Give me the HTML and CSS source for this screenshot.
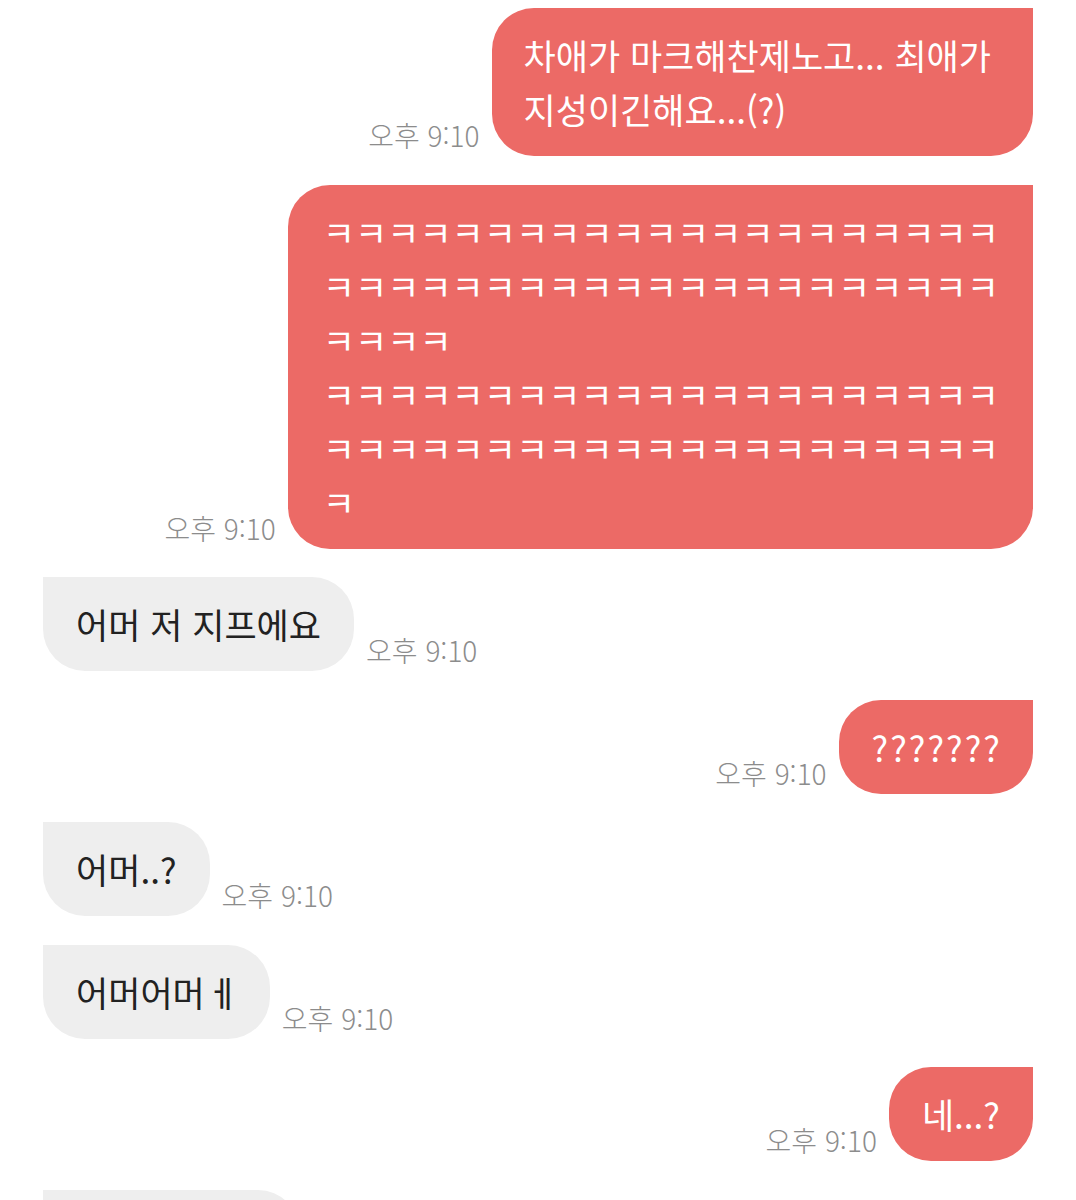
FILE: index.html
```html
<!DOCTYPE html>
<html lang="ko">
<head>
<meta charset="utf-8">
<title>채팅</title>
<link rel="stylesheet" href="styles.css">
</head>
<body>
<div class="chat">
  <div class="row sent">
    <span class="time">오후 9:10</span>
    <div class="bubble wide">차애가 마크해찬제노고... 최애가<br>지성이긴해요...(?)</div>
  </div>
  <div class="row sent">
    <span class="time">오후 9:10</span>
    <div class="bubble kk">ㅋㅋㅋㅋㅋㅋㅋㅋㅋㅋㅋㅋㅋㅋㅋㅋㅋㅋㅋㅋㅋ<br>ㅋㅋㅋㅋㅋㅋㅋㅋㅋㅋㅋㅋㅋㅋㅋㅋㅋㅋㅋㅋㅋ<br>ㅋㅋㅋㅋ<br>ㅋㅋㅋㅋㅋㅋㅋㅋㅋㅋㅋㅋㅋㅋㅋㅋㅋㅋㅋㅋㅋ<br>ㅋㅋㅋㅋㅋㅋㅋㅋㅋㅋㅋㅋㅋㅋㅋㅋㅋㅋㅋㅋㅋ<br>ㅋ</div>
  </div>
  <div class="row recv">
    <div class="bubble">어머 저 지프에요</div>
    <span class="time">오후 9:10</span>
  </div>
  <div class="row sent">
    <span class="time">오후 9:10</span>
    <div class="bubble qq">???????</div>
  </div>
  <div class="row recv">
    <div class="bubble">어머..?</div>
    <span class="time">오후 9:10</span>
  </div>
  <div class="row recv">
    <div class="bubble tight">어머어머 ㅔ</div>
    <span class="time">오후 9:10</span>
  </div>
  <div class="row sent">
    <span class="time">오후 9:10</span>
    <div class="bubble">네...?</div>
  </div>
  <div class="row recv">
    <div class="bubble partial">&nbsp;</div>
  </div>
</div>
</body>
</html>
```
FILE: styles.css
```css
html, body {
  margin: 0;
  padding: 0;
  background: #ffffff;
}

body {
  font-family: "Noto Sans CJK KR", "Noto Sans", sans-serif;
}

.chat {
  display: flex;
  flex-direction: column;
  gap: 28.5px;
  padding: 8px 43px 0 43px;
}

.row {
  display: flex;
  align-items: flex-end;
  gap: 12px;
}

.row.sent {
  justify-content: flex-end;
}

.row.recv {
  justify-content: flex-start;
}

.bubble {
  font-size: 35px;
  line-height: 54px;
  padding: 20px 33px;
  border-radius: 42px;
  white-space: nowrap;
}

.sent .bubble {
  background: #ec6a66;
  color: #ffffff;
  border-top-right-radius: 0;
}

.recv .bubble {
  background: #eeeeee;
  color: #222222;
  border-top-left-radius: 0;
}

.bubble.wide {
  padding-left: 32px;
  padding-right: 42px;
}

.bubble.kk {
  padding-left: 35px;
  padding-right: 34px;
}

.bubble.qq {
  letter-spacing: 2px;
  padding-right: 31px;
}

.bubble.tight {
  word-spacing: -8px;
  padding-right: 31px;
}

.bubble.partial {
  width: 191px;
}

.time {
  font-size: 28px;
  font-weight: 300;
  line-height: 34px;
  color: #8c8c8c;
  margin-bottom: 4px;
  white-space: nowrap;
}
```
